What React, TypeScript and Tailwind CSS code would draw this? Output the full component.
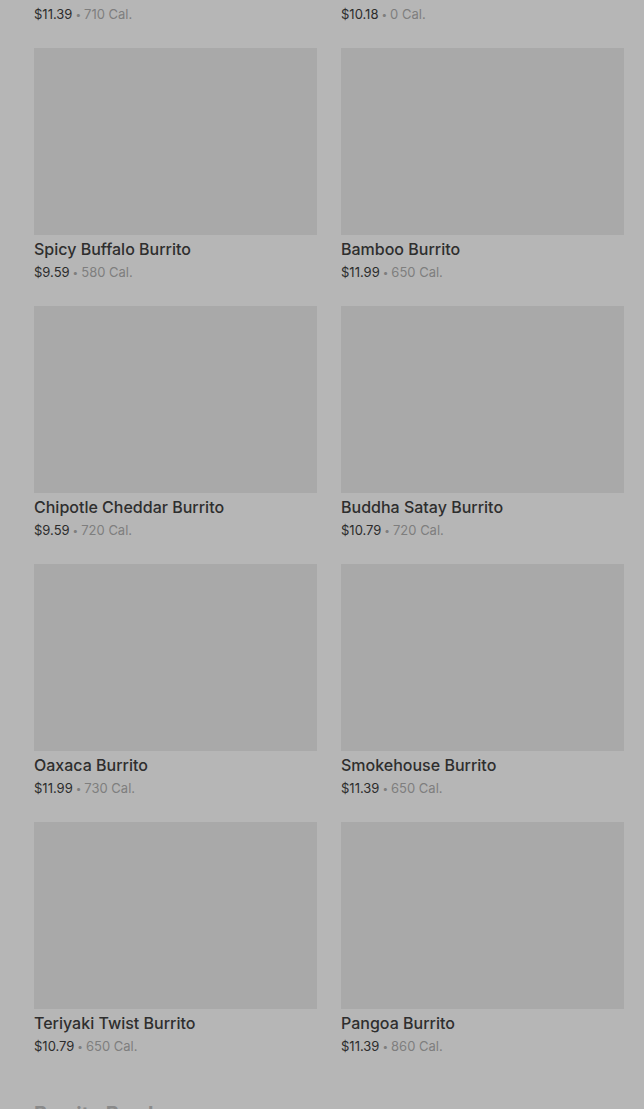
const ITEMS = [
  { name: "Carne Asada Burrito", price: "$11.39", cal: "710 Cal." },
  { name: "Build Your Own Burrito", price: "$10.18", cal: "0 Cal." },
  { name: "Spicy Buffalo Burrito", price: "$9.59", cal: "580 Cal." },
  { name: "Bamboo Burrito", price: "$11.99", cal: "650 Cal." },
  { name: "Chipotle Cheddar Burrito", price: "$9.59", cal: "720 Cal." },
  { name: "Buddha Satay Burrito", price: "$10.79", cal: "720 Cal." },
  { name: "Oaxaca Burrito", price: "$11.99", cal: "730 Cal." },
  { name: "Smokehouse Burrito", price: "$11.39", cal: "650 Cal." },
  { name: "Teriyaki Twist Burrito", price: "$10.79", cal: "650 Cal." },
  { name: "Pangoa Burrito", price: "$11.39", cal: "860 Cal." },
];

function ItemCard({ item }: { item: (typeof ITEMS)[number] }) {
  return (
    <div className="flex flex-col">
      <div className="h-[187px] bg-[#a9a9a9]" />
      <div className="mt-[4px] truncate text-[16px] leading-5 font-medium text-[#2e2e2e]">{item.name}</div>
      <div className="mt-[4px] flex items-center text-[13px] leading-[18px]">
        <span className="text-[#2c2c2c]">{item.price}</span>
        <span className="mx-[3px] text-[10px] text-[#7e7e7e]">•</span>
        <span className="text-[#7e7e7e]">{item.cal}</span>
      </div>
    </div>
  );
}

export default function App() {
  return (
    <div
      className="h-[1109px] w-full overflow-hidden bg-[#b6b6b6]"
      style={{ fontFamily: "Inter, 'Noto Sans', sans-serif" }}
    >
      <div className="mt-[-210px] grid grid-cols-2 gap-x-6 gap-y-[25px] pl-[34px] pr-[20px]">
        {ITEMS.map((item) => (
          <ItemCard key={item.name} item={item} />
        ))}
      </div>
      <h2 className="mt-[45px] pl-[34px] text-[20px] leading-7 font-bold text-[#8a8a8a]">Burrito Bowls</h2>
    </div>
  );
}
